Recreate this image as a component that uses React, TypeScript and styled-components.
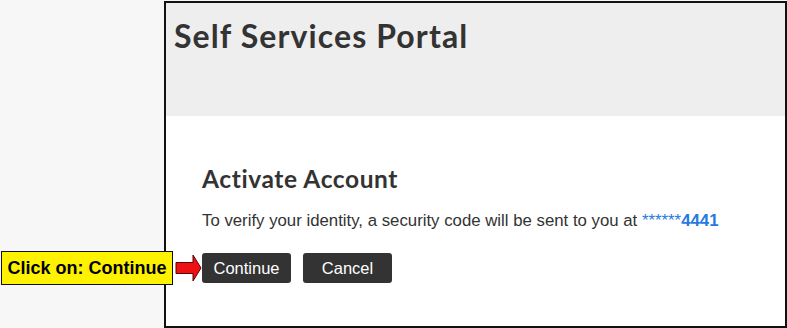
import styled, { createGlobalStyle } from "styled-components";

const GlobalStyle = createGlobalStyle`
  html, body {
    margin: 0;
    padding: 0;
    background: #f7f7f7;
  }
`;

const Page = styled.div`
  position: relative;
  width: 787px;
  height: 328px;
  padding: 1px 0 0 164px;
  box-sizing: border-box;
  background: #f7f7f7;
`;

const Frame = styled.div`
  width: 623px;
  height: 327px;
  box-sizing: border-box;
  border: 2px solid #111;
  background: #fff;
  display: flex;
  flex-direction: column;
`;

const Header = styled.header`
  height: 113px;
  background: #eeeeee;
  padding: 14px 0 0 8px;
  box-sizing: border-box;
`;

const PortalTitle = styled.h1`
  margin: 0;
  font-family: Lato, "Open Sans", sans-serif;
  font-weight: 700;
  font-size: 32px;
  letter-spacing: 1.1px;
  line-height: 38px;
  color: #333;
`;

const Content = styled.main`
  padding: 48px 0 0 36px;
`;

const Heading = styled.h2`
  margin: 0;
  font-family: Lato, "Open Sans", sans-serif;
  font-weight: 700;
  font-size: 24.5px;
  letter-spacing: 0.6px;
  line-height: 30px;
  color: #333;
`;

const Message = styled.p`
  margin: 17px 0 0;
  font-family: "Liberation Sans", Arial, sans-serif;
  font-size: 16.8px;
  line-height: 20px;
  color: #333;
`;

const Phone = styled.span`
  color: #2779e2;
`;

const Digits = styled.b`
  font-weight: 700;
`;

const Actions = styled.div`
  display: flex;
  gap: 12px;
  margin-top: 22px;
`;

const Button = styled.button`
  width: 89px;
  height: 30px;
  border: none;
  border-radius: 3px;
  background: #333;
  color: #fff;
  font-family: "Liberation Sans", Arial, sans-serif;
  font-size: 16.5px;
  padding: 0;
  cursor: pointer;
`;

const Callout = styled.div`
  position: absolute;
  left: 1px;
  top: 251px;
  display: flex;
  align-items: center;
  gap: 2px;
`;

const CalloutBox = styled.div`
  width: 172px;
  height: 34px;
  box-sizing: border-box;
  border: 1px solid #111;
  background: #fff200;
  display: flex;
  align-items: center;
  justify-content: center;
  font-family: "Liberation Sans", Arial, sans-serif;
  font-weight: 700;
  font-size: 18px;
  color: #000;
`;

const Arrow = () => (
  <svg width="27" height="30" viewBox="0 0 27 30">
    <path
      d="M1 9.5 H18 V2 L26 15 L18 28 V20.5 H1 Z"
      fill="#ee1111"
      stroke="#5a0000"
      strokeWidth="1"
    />
  </svg>
);

export default function App() {
  return (
    <>
      <GlobalStyle />
      <Page>
        <Frame>
          <Header>
            <PortalTitle>Self Services Portal</PortalTitle>
          </Header>
          <Content>
            <Heading>Activate Account</Heading>
            <Message>
              To verify your identity, a security code will be sent to you at{" "}
              <Phone>
                ******<Digits>4441</Digits>
              </Phone>
            </Message>
            <Actions>
              <Button type="button">Continue</Button>
              <Button type="button">Cancel</Button>
            </Actions>
          </Content>
        </Frame>
        <Callout>
          <CalloutBox>Click on: Continue</CalloutBox>
          <Arrow />
        </Callout>
      </Page>
    </>
  );
}
